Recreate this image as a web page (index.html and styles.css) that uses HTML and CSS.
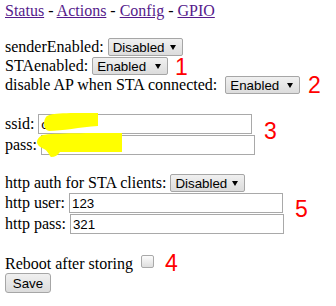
FILE: index.html
```html
<!DOCTYPE html>
<html lang="en">

<head>
    <meta charset="UTF-8">
    <title>Config</title>
    <meta name="viewport" content="width=device-width, initial-scale=1.0">
    <link rel="stylesheet" href="styles.css">
</head>

<body>

    <div class="nav">
        <a href="#">Status</a> - <a href="#">Actions</a> - <a href="#">Config</a> - <a href="#">GPIO</a>
    </div>

    <form class="config">
        <div class="row">senderEnabled: <span class="pick"><select>
                    <option>Disabled</option>
                    <option>Enabled</option>
                </select></span></div>
        <div class="row">STAenabled: <span class="pick"><select class="wide">
                    <option>Enabled</option>
                    <option>Disabled</option>
                </select></span></div>
        <div class="row">disable AP when STA connected: <span class="pick far"><select>
                    <option>Enabled</option>
                    <option>Disabled</option>
                </select></span></div>

        <div class="field first">ssid: <input type="text" value="c"></div>
        <div class="field">pass: <input type="password"></div>

        <div class="row gap">http auth for STA clients: <span class="pick"><select>
                    <option>Disabled</option>
                    <option>Enabled</option>
                </select></span></div>
        <div class="field">http user: <input type="text" value="123"></div>
        <div class="field">http pass: <input type="text" value="321"></div>

        <div class="reboot">Reboot after storing <input type="checkbox"></div>
        <button type="button">Save</button>

        <!-- redaction strokes -->
        <svg class="redact" width="336" height="306" viewBox="0 0 336 306">
            <path d="M46,117 C49,113 62,113 98,113 L98,126 C80,127 62,131 49,131 C43,130 43,121 46,117 Z" />
            <path d="M43,135 C52,133 92,133 122,133 L122,152 L60,152 C58,155 55,157 51,157 C49,155 48,151 44,149 C40,147 37,145 37,142 C37,139 40,136 43,135 Z" />
        </svg>

        <!-- screenshot annotations -->
        <span class="mark m1">1</span>
        <span class="mark m2">2</span>
        <span class="mark m3">3</span>
        <span class="mark m5">5</span>
        <span class="mark m4">4</span>
    </form>

</body>

</html>
```

FILE: styles.css
```css
body {
    font-family: "Liberation Serif", "Times New Roman", serif;
    font-size: 16px;
    margin: 0;
    padding: 0 5px;
    color: #000;
    background: #fff;
    position: relative;
}

a {
    color: #551a8b;
}

.nav {
    height: 38px;
    padding-top: 2px;
    line-height: 18px;
    box-sizing: border-box;
}

.row {
    height: 19px;
    line-height: 16px;
}

.field {
    height: 21px;
    line-height: 16px;
}

.field.first {
    margin-top: 19px;
}

.row.gap {
    margin-top: 18px;
}

.reboot {
    margin-top: 20px;
    height: 18px;
    line-height: 16px;
}

.pick {
    display: inline-block;
    position: relative;
}

.pick.far {
    margin-left: 4px;
}

.pick::after {
    content: "";
    position: absolute;
    right: 7px;
    top: 7px;
    border-left: 3px solid transparent;
    border-right: 3px solid transparent;
    border-top: 5px solid #000;
    pointer-events: none;
}

select,
button {
    -webkit-appearance: none;
    appearance: none;
    font-family: "Liberation Sans", Arial, sans-serif;
    font-size: 13.33px;
    color: #000;
    height: 18px;
    width: 75px;
    margin: 0;
    padding: 0 0 0 4px;
    border: 1px solid #a6a6a6;
    border-radius: 2px;
    background: linear-gradient(#f0f0f0, #e6e6e6 50%, #dcdcdc);
    box-sizing: border-box;
}

select.wide {
    width: 76px;
}

input[type="text"],
input[type="password"] {
    font-family: "Liberation Sans", Arial, sans-serif;
    font-size: 13.33px;
    width: 214px;
    height: 20px;
    margin: 0;
    padding: 0 2px;
    border: 1px solid #a9a9a9;
    box-sizing: border-box;
    color: #000;
}

input[type="checkbox"] {
    -webkit-appearance: none;
    appearance: none;
    width: 13px;
    height: 13px;
    margin: 0 0 1px 4px;
    border: 1px solid #a9a9a9;
    border-radius: 2px;
    background: linear-gradient(#fcfcfc, #dedede);
    box-sizing: border-box;
    vertical-align: baseline;
}

button {
    display: block;
    width: 46px;
    height: 20px;
    padding: 0;
    text-align: center;
    border-radius: 3px;
}

.redact {
    position: absolute;
    left: 0;
    top: 0;
    pointer-events: none;
}

.redact path {
    fill: #ffff00;
}

.mark {
    position: absolute;
    font-family: "Liberation Sans", Arial, sans-serif;
    font-size: 23px;
    line-height: 16px;
    color: #ff0000;
}

.m1 { left: 175px; top: 59px; }
.m2 { left: 308px; top: 77px; }
.m3 { left: 264px; top: 123px; }
.m5 { left: 295px; top: 201px; }
.m4 { left: 165px; top: 255px; }
```
